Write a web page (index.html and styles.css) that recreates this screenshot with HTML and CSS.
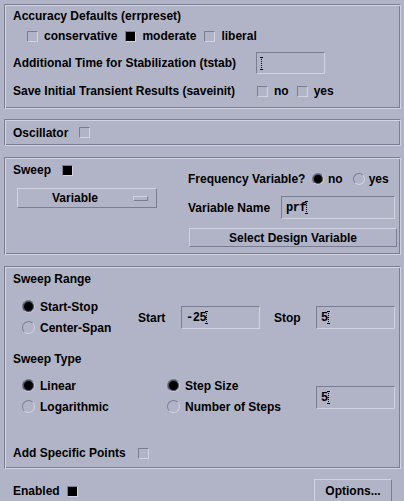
FILE: index.html
```html
<!DOCTYPE html>
<html>
<head>
<meta charset="utf-8">
<link rel="stylesheet" href="styles.css">
</head>
<body>
<div class="frame f1">
  <div class="row h20 pt1">Accuracy Defaults (errpreset)</div>
  <div class="row h20 ml14">
    <span class="opt"><span class="cb"></span>conservative</span>
    <span class="opt"><span class="cb on"></span>moderate</span>
    <span class="opt"><span class="cb"></span>liberal</span>
  </div>
  <div class="row h26 mt4">
    <span class="lbl w243">Additional Time for Stabilization (tstab)</span>
    <span class="field w69 h22"><span class="caret"></span></span>
  </div>
  <div class="row h22 mt4">
    <span class="lbl w244">Save Initial Transient Results (saveinit)</span>
    <span class="opt"><span class="cb"></span>no</span>
    <span class="opt"><span class="cb"></span>yes</span>
  </div>
</div>

<div class="frame f2">
  <div class="row h23 pt2">
    <span class="lbl w66">Oscillator</span><span class="cb"></span>
  </div>
</div>

<div class="frame f3">
  <div class="col-left">
    <div class="row h20">
      <span class="lbl w49">Sweep</span><span class="cb on"></span>
    </div>
    <div class="optmenu">
      <span class="optmenu-text">Variable</span>
      <span class="indicator"></span>
    </div>
  </div>
  <div class="col-right">
    <div class="row h21 mt8">
      <span class="lbl w124">Frequency Variable?</span>
      <span class="ropt"><span class="rb on"></span>no</span>
      <span class="ropt"><span class="rb"></span>yes</span>
    </div>
    <div class="row h23 mt7">
      <span class="lbl w93">Variable Name</span>
      <span class="field w114 h23"><span class="val">prf</span><span class="caret"></span></span>
    </div>
    <div class="pushbtn selbtn">Select Design Variable</div>
  </div>
</div>

<div class="frame f4">
  <div class="row h20">Sweep Range</div>
  <div class="range">
    <div class="radios w125">
      <div class="row h21"><span class="ropt"><span class="rb on"></span>Start-Stop</span></div>
      <div class="row h21"><span class="ropt"><span class="rb"></span>Center-Span</span></div>
    </div>
    <div class="range-fields">
      <span class="lbl w43">Start</span>
      <span class="field w79 h23"><span class="val">-25</span><span class="caret"></span></span>
      <span class="lbl w42 ml14">Stop</span>
      <span class="field w79 h23"><span class="val">5</span><span class="caret"></span></span>
    </div>
  </div>
  <div class="row h20 mt11">Sweep Type</div>
  <div class="types">
    <div class="radios w154">
      <div class="row h21"><span class="ropt"><span class="rb on"></span>Linear</span></div>
      <div class="row h21"><span class="ropt"><span class="rb"></span>Logarithmic</span></div>
    </div>
    <div class="radios2 w149">
      <div class="row h21"><span class="ropt"><span class="rb on"></span>Step Size</span></div>
      <div class="row h21"><span class="ropt"><span class="rb"></span>Number of Steps</span></div>
    </div>
    <span class="field w79 h23 mt11"><span class="val">5</span><span class="caret"></span></span>
  </div>
  <div class="row h20 mt26">
    <span class="lbl w125">Add Specific Points</span><span class="cb"></span>
  </div>
</div>

<div class="footer">
  <div class="row h24">
    <span class="lbl w54">Enabled</span><span class="cb on"></span>
  </div>
  <div class="pushbtn options">Options...</div>
</div>
</body>
</html>
```

FILE: styles.css
```css
:root {
  --bg: #b1b4c7;
  --dk: #7b7e90;
  --lt: #d0d3e2;
}
* { box-sizing: border-box; }
html, body {
  margin: 0;
  padding: 0;
}
body {
  width: 404px;
  height: 501px;
  overflow: hidden;
  background: var(--bg);
  color: #000;
  font: bold 12px "Liberation Sans", Arial, sans-serif;
}

.frame {
  margin: 0 3px 0 4px;
  padding: 0 0 0 8px;
  border-top: 1px solid var(--dk);
  border-left: 1px solid var(--dk);
  border-right: 1px solid var(--lt);
  border-bottom: 1px solid var(--lt);
  box-shadow: inset 1px 1px 0 var(--lt), inset -1px -1px 0 var(--dk);
}
.f1 { margin-top: 4px; height: 105px; padding-top: 1px; }
.f2 { margin-top: 10px; height: 27px; }
.f3 {
  margin-top: 11px;
  height: 98px;
  padding-top: 2px;
  display: grid;
  grid-template-columns: 175px 1fr;
}
.f4 { margin-top: 11px; height: 203px; padding-top: 2px; }

.row { display: flex; align-items: center; white-space: nowrap; }
.h20 { height: 20px; }
.h21 { height: 21px; }
.h22 { height: 22px; }
.h23 { height: 23px; }
.h24 { height: 24px; }
.h26 { height: 26px; }
.pt1 { padding-top: 0; }
.pt2 { padding-top: 2px; }
.mt4 { margin-top: 4px; }
.mt7 { margin-top: 7px; }
.mt8 { margin-top: 8px; }
.mt11 { margin-top: 11px; }
.mt26 { margin-top: 26px; }
.ml14 { margin-left: 14px; }

.lbl { display: inline-block; flex: none; }
.w42 { width: 42px; }
.w43 { width: 43px; }
.w49 { width: 49px; }
.w54 { width: 54px; }
.w66 { width: 66px; }
.w69 { width: 69px; }
.w79 { width: 79px; }
.w93 { width: 93px; }
.w114 { width: 114px; }
.w124 { width: 124px; }
.w125 { width: 125px; }
.w149 { width: 149px; }
.w154 { width: 154px; }
.w243 { width: 243px; }
.w244 { width: 244px; }

/* check boxes */
.opt { display: inline-flex; align-items: center; margin-right: 8px; }
.cb {
  display: inline-block;
  flex: none;
  width: 11px;
  height: 11px;
  border-top: 1px solid var(--dk);
  border-left: 1px solid var(--dk);
  border-right: 1px solid var(--lt);
  border-bottom: 1px solid var(--lt);
}
.opt .cb { margin-right: 6px; }
.cb.on { background: #000; }

/* radio buttons */
.ropt { display: inline-flex; align-items: center; margin-right: 10px; }
.rb {
  display: inline-block;
  flex: none;
  width: 13px;
  height: 13px;
  border-radius: 50%;
  border: 1px solid;
  border-color: var(--dk) var(--lt) var(--lt) var(--dk);
  margin-right: 5px;
}
.rb.on {
  background: #000;
  box-shadow: inset 0 0 0 1px #55586a;
}
.col-right .rb { width: 12px; height: 12px; margin-right: 4px; }

/* text fields */
.field {
  display: inline-flex;
  align-items: center;
  flex: none;
  padding-left: 4px;
  border-top: 1px solid var(--dk);
  border-left: 1px solid var(--dk);
  border-right: 1px solid var(--lt);
  border-bottom: 1px solid var(--lt);
  font: bold 12px "Liberation Mono", "Courier New", monospace;
}
.h22.field { height: 22px; }
.val { letter-spacing: -0.5px; }
.caret {
  position: relative;
  display: inline-block;
  width: 1px;
  height: 13px;
  margin-left: 0;
  border-left: 1px dotted #000;
}
.caret::before, .caret::after {
  content: "";
  position: absolute;
  left: -2px;
  width: 3px;
  height: 1px;
  background: #000;
}
.caret::before { top: 0; }
.caret::after { bottom: 0; }

/* option menu */
.optmenu {
  position: relative;
  margin: 8px 0 0 4px;
  width: 140px;
  height: 20px;
  display: flex;
  align-items: center;
  padding-left: 34px;
  border-top: 1px solid var(--lt);
  border-left: 1px solid var(--lt);
  border-right: 1px solid var(--dk);
  border-bottom: 1px solid var(--dk);
}
.indicator {
  position: absolute;
  left: 115px;
  top: 7px;
  width: 15px;
  height: 5px;
  border-top: 1px solid var(--lt);
  border-left: 1px solid var(--lt);
  border-right: 1px solid var(--dk);
  border-bottom: 1px solid var(--dk);
}

/* push buttons */
.pushbtn {
  display: flex;
  align-items: center;
  justify-content: center;
  white-space: nowrap;
  border-top: 1px solid var(--lt);
  border-left: 1px solid var(--lt);
  border-right: 1px solid var(--dk);
  border-bottom: 1px solid var(--dk);
}
.selbtn {
  margin: 9px 0 0 1px;
  width: 208px;
  height: 19px;
}

/* sweep range */
.range { display: flex; margin-top: 7px; height: 42px; }
.radios { padding-left: 9px; flex: none; }
.radios2 { flex: none; }
.range-fields { display: flex; align-items: center; height: 23px; margin-top: 10px; }
.types { display: flex; margin-top: 6px; height: 42px; align-items: flex-start; }
.types .field { margin-top: 11px; }

.footer {
  display: flex;
  align-items: flex-start;
  padding: 10px 12px 0 13px;
}
.options {
  margin-left: auto;
  width: 78px;
  height: 24px;
}
```
